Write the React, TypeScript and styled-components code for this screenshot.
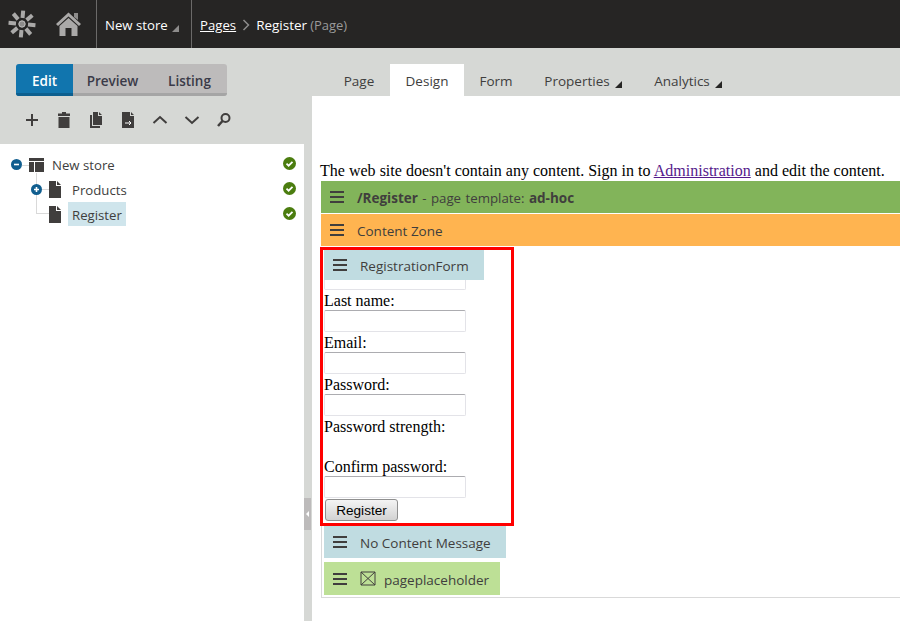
import React from 'react';
import styled, { createGlobalStyle } from 'styled-components';

const ui = '"Open Sans", "Noto Sans", sans-serif';

const GlobalStyle = createGlobalStyle`
  html, body {
    margin: 0;
    padding: 0;
    height: 621px;
    overflow: hidden;
    background: #d6d8d5;
  }
  * { box-sizing: border-box; }
`;

const Page = styled.div`
  width: 900px;
  height: 621px;
  display: flex;
  flex-direction: column;
  position: relative;
  overflow: hidden;
  font-family: ${ui};
  font-size: 13.5px;
  color: #403e3d;
`;

const Header = styled.header`
  height: 48px;
  background: #262524;
  display: flex;
  align-items: stretch;
  flex-shrink: 0;
`;

const Brand = styled.div`
  width: 97px;
  padding-left: 8px;
  display: flex;
  align-items: center;
  gap: 20px;
  border-right: 1px solid #6b6a69;
`;

const SiteSelect = styled.div`
  width: 95px;
  padding: 2px 0 0 8px;
  display: flex;
  align-items: center;
  gap: 4px;
  color: #fff;
  font-size: 13.2px;
  border-right: 1px solid #6b6a69;
`;

const Caret = styled.span<{ $color: string }>`
  width: 0;
  height: 0;
  margin-top: 7px;
  border-style: solid;
  border-width: 0 0 7px 7px;
  border-color: transparent transparent ${p => p.$color} transparent;
`;

const Crumbs = styled.nav`
  padding: 2px 0 0 8px;
  display: flex;
  align-items: center;
  gap: 6px;
  color: #fff;
`;

const CrumbLink = styled.a`
  color: #fff;
  font-size: 13.2px;
  text-decoration: underline;
`;

const CrumbType = styled.span`
  color: #9a9a9a;
  font-size: 13px;
  margin-left: -3px;
`;

const Body = styled.div`
  flex: 1;
  display: flex;
  min-height: 0;
`;

const Side = styled.aside`
  width: 304px;
  display: flex;
  flex-direction: column;
`;

const ModeBar = styled.div`
  margin: 16px 0 0 16px;
  width: 211px;
  height: 32px;
  display: flex;
  border-radius: 3px;
  overflow: hidden;
  background: #bdbbbb;
`;

const ModeButton = styled.div<{ $active?: boolean; $width: number }>`
  width: ${p => p.$width}px;
  height: 32px;
  display: flex;
  align-items: center;
  justify-content: center;
  font-weight: 600;
  padding-top: 4px;
  color: ${p => (p.$active ? '#fff' : '#3a3a48')};
  background: ${p => (p.$active ? '#1175ae' : 'transparent')};
  border-bottom: 3px solid ${p => (p.$active ? '#0d5f8f' : '#a5a5a5')};
  flex-shrink: 0;
`;

const Tools = styled.div`
  height: 48px;
  display: flex;
  align-items: center;
  padding-left: 24px;
  gap: 16px;
  svg { display: block; }
`;

const Tree = styled.div`
  flex: 1;
  background: #fff;
  padding-top: 8px;
  position: relative;
  font-size: 13.2px;
`;

const TreeRow = styled.div<{ $indent: number }>`
  height: 25px;
  display: flex;
  align-items: center;
  padding-left: ${p => p.$indent}px;
  position: relative;
`;

const TreeIcon = styled.span`
  width: 19px;
  display: flex;
  flex-shrink: 0;
`;

const Toggle = styled.span`
  width: 11px;
  height: 11px;
  border-radius: 50%;
  background: #105e8f;
  color: #fff;
  display: flex;
  align-items: center;
  justify-content: center;
  flex-shrink: 0;
  margin-right: 7px;
  position: relative;
  z-index: 1;
`;

const TreeLabel = styled.span<{ $selected?: boolean }>`
  padding: 0 4px;
  height: 24px;
  line-height: 26px;
  margin-bottom: 1px;
  background: ${p => (p.$selected ? '#cfe5ec' : 'transparent')};
`;

const StatusDot = styled.span`
  position: absolute;
  right: 8px;
  top: 5px;
  width: 13px;
  height: 13px;
  svg { display: block; }
`;

const Connector = styled.span<{ $left: number; $top: number; $w: number; $h: number }>`
  position: absolute;
  left: ${p => p.$left}px;
  top: ${p => p.$top}px;
  width: ${p => p.$w}px;
  height: ${p => p.$h}px;
  background: #d9d9d9;
`;

const Splitter = styled.div`
  width: 8px;
  position: relative;
`;

const SplitterHandle = styled.div`
  position: absolute;
  left: 0;
  top: 450px;
  width: 7px;
  height: 32px;
  background: #bdbbbb;
  display: flex;
  align-items: center;
  justify-content: center;
  &::after {
    content: '';
    border-style: solid;
    border-width: 3px 3px 3px 0;
    border-color: transparent #fff transparent transparent;
  }
`;

const Main = styled.main`
  flex: 1;
  display: flex;
  flex-direction: column;
  min-width: 0;
`;

const Tabs = styled.div`
  height: 48px;
  padding: 16px 0 0 16px;
  display: flex;
`;

const Tab = styled.div<{ $active?: boolean; $width: number }>`
  width: ${p => p.$width}px;
  height: 32px;
  display: flex;
  align-items: center;
  justify-content: center;
  gap: 5px;
  padding-top: 1px;
  background: ${p => (p.$active ? '#fff' : 'transparent')};
`;

const Canvas = styled.div`
  flex: 1;
  background: #fff;
  padding: 65px 0 0 8px;
  font-family: "Liberation Serif", serif;
  font-size: 16px;
  color: #000;
`;

const Intro = styled.div`
  height: 20px;
  line-height: 20px;
  white-space: nowrap;
  letter-spacing: 0.012px;
  a { color: #551a8b; text-decoration: underline; }
`;

const Zone = styled.div`
  margin-left: 1px;
  border-left: 1px solid #d9d9d9;
  border-bottom: 1px solid #d9d9d9;
  height: 351px;
`;

const Bar = styled.div<{ $bg: string; $tall?: number; $width?: number }>`
  height: ${p => p.$tall ?? 32}px;
  width: ${p => (p.$width ? `${p.$width}px` : 'auto')};
  background: ${p => p.$bg};
  display: flex;
  align-items: center;
  font-family: ${ui};
  font-size: 13.5px;
  color: #403e3d;
  white-space: nowrap;
  padding-left: 9px;
  margin-bottom: 1px;
  b { font-weight: 700; }
`;

const TopBar = styled(Bar)`
  margin-left: 1px;
`;

const BarText = styled.span`
  padding-top: 2px;
`;

const TemplateNote = styled.span`
  font-size: 13.3px;
  word-spacing: 0.9px;
`;

const BarIcon = styled.svg`
  width: 14px;
  height: 12px;
  margin-right: 13px;
  flex-shrink: 0;
`;

const PlaceholderIcon = styled.svg`
  width: 16px;
  height: 15px;
  margin-right: 8px;
  flex-shrink: 0;
`;

const RedBox = styled.div`
  width: 194px;
  height: 279px;
  margin-left: -2px;
  border: 3px solid #f00;
  position: relative;
  padding-left: 1px;
`;

const WebPartHeader = styled(Bar)`
  position: absolute;
  left: 1px;
  top: 0;
  z-index: 1;
`;

const Field = styled.div`
  height: 22px;
  width: 142px;
  background: #fff;
  border: 1px solid #e3e3e8;
  border-top-color: #acacb0;
  border-radius: 2px;
`;

const HiddenField = styled(Field)`
  margin-top: 18px;
`;

const Label = styled.div<{ $gap?: number }>`
  height: 20px;
  line-height: 21px;
  margin-bottom: ${p => p.$gap ?? 0}px;
  white-space: nowrap;
`;

const SubmitButton = styled.button`
  display: block;
  margin: 1px 0 0 1px;
  width: 73px;
  height: 22px;
  padding: 0;
  font-family: "Liberation Sans", sans-serif;
  font-size: 13.6px;
  color: #000;
  border: 1px solid #8f8f8f;
  border-radius: 3px;
  background: linear-gradient(#f4f4f4, #d2d2d2);
`;

const PlainBar = styled(Bar)`
  margin-left: 2px;
  margin-bottom: 4px;
`;

const Menu = () => (
  <BarIcon viewBox="0 0 14 12">
    <path d="M0 1h14M0 6h14M0 11h14" stroke="#403e3d" strokeWidth="2" />
  </BarIcon>
);

const DocIcon = () => (
  <svg width="12" height="17" viewBox="0 0 12 17">
    <path d="M0 0h7v5h5v12H0zM8 0l4 4H8z" fill="#403e3d" />
  </svg>
);

const Check = () => (
  <StatusDot>
    <svg width="13" height="13" viewBox="0 0 13 13">
      <circle cx="6.5" cy="6.5" r="6.5" fill="#4b7d0f" />
      <path d="M3.5 6.7l2.1 2 3.9-3.9" fill="none" stroke="#fff" strokeWidth="1.8" />
    </svg>
  </StatusDot>
);

const Logo = () => (
  <svg width="28" height="28" viewBox="0 0 28 28">
    <g stroke="#aaa9a8" strokeWidth="4">
      {[0, 45, 90, 135, 180, 225, 270, 315].map(a => (
        <line key={a} x1="14" y1="8" x2="14" y2="0.5" transform={`rotate(${a + 5} 14 14)`} />
      ))}
    </g>
    <circle cx="14" cy="14" r="5.5" fill="#262524" />
    <circle cx="14" cy="14" r="3.2" fill="#8d8c8b" stroke="#c4c3c2" />
  </svg>
);

const Home = () => (
  <svg width="25" height="24" viewBox="0 0 25 24">
    <path d="M18 1h4v7l-4-3z" fill="#8d8c8b" />
    <path d="M1 13L12.500 2.500 24 13" fill="none" stroke="#aaa9a8" strokeWidth="3" />
    <path d="M3.500 14l9-8 9 8v10h-6v-8h-6v8h-6z" fill="#aaa9a8" />
  </svg>
);

export default function App() {
  return (
    <Page>
      <GlobalStyle />
      <Header>
        <Brand>
          <Logo />
          <Home />
        </Brand>
        <SiteSelect>
          New store <Caret $color="#8d8c8b" />
        </SiteSelect>
        <Crumbs>
          <CrumbLink>Pages</CrumbLink>
          <svg width="8" height="12" viewBox="0 0 8 12">
            <path d="M1.5 1l5 5-5 5" fill="none" stroke="#8d8c8b" strokeWidth="1.5" />
          </svg>
          <span>Register</span>
          <CrumbType>(Page)</CrumbType>
        </Crumbs>
      </Header>
      <Body>
        <Side>
          <ModeBar>
            <ModeButton $active $width={57}>Edit</ModeButton>
            <ModeButton $width={79}>Preview</ModeButton>
            <ModeButton $width={75}>Listing</ModeButton>
          </ModeBar>
          <Tools>
            <svg width="16" height="16" viewBox="0 0 16 16">
              <path d="M8 2v12M2 8h12" stroke="#403e3d" strokeWidth="2" />
            </svg>
            <svg width="16" height="16" viewBox="0 0 16 16">
              <path d="M2 1.500h4V0h4v1.500h4V4H2zM2.500 5h11v11h-11z" fill="#403e3d" />
            </svg>
            <svg width="16" height="16" viewBox="0 0 16 16">
              <path d="M5 0h5v4h4v9H5zM11 0l3 3h-3zM2 3h2v11h8v2H2z" fill="#403e3d" />
            </svg>
            <svg width="16" height="16" viewBox="0 0 16 16">
              <path d="M2 0h8v4h4v12H2zM11 0l3 3h-3z" fill="#403e3d" />
              <path d="M5 11h6M9 9l2 2-2 2" stroke="#fff" fill="none" />
            </svg>
            <svg width="16" height="16" viewBox="0 0 16 16">
              <path d="M1.500 11l6.500-6 6.500 6" fill="none" stroke="#403e3d" strokeWidth="2" />
            </svg>
            <svg width="16" height="16" viewBox="0 0 16 16">
              <path d="M1.500 5l6.500 6 6.500-6" fill="none" stroke="#403e3d" strokeWidth="2" />
            </svg>
            <svg width="16" height="16" viewBox="0 0 16 16">
              <circle cx="9.500" cy="6" r="4" fill="none" stroke="#403e3d" strokeWidth="2" />
              <path d="M6.500 9l-4.500 5" stroke="#403e3d" strokeWidth="2.500" />
            </svg>
          </Tools>
          <Tree>
            <Connector $left={36} $top={29} $w={1} $h={41} />
            <Connector $left={36} $top={69} $w={14} $h={1} />
            <Connector $left={22} $top={21} $w={8} $h={1} />
            <Connector $left={42} $top={45} $w={8} $h={1} />
            <TreeRow $indent={11}>
              <Toggle>
                <svg width="7" height="7" viewBox="0 0 7 7"><path d="M1 3.500h5" stroke="#fff" strokeWidth="1.600" /></svg>
              </Toggle>
              <TreeIcon>
                <svg width="15" height="14" viewBox="0 0 15 14">
                  <path d="M0 0h15v3H0zM0 4h5v10H0zM6 4h9v10H6z" fill="#403e3d" />
                </svg>
              </TreeIcon>
              <TreeLabel>New store</TreeLabel>
              <Check />
            </TreeRow>
            <TreeRow $indent={31}>
              <Toggle>
                <svg width="7" height="7" viewBox="0 0 7 7"><path d="M1 3.500h5M3.500 1v5" stroke="#fff" strokeWidth="1.600" /></svg>
              </Toggle>
              <TreeIcon><DocIcon /></TreeIcon>
              <TreeLabel>Products</TreeLabel>
              <Check />
            </TreeRow>
            <TreeRow $indent={49}>
              <TreeIcon><DocIcon /></TreeIcon>
              <TreeLabel $selected>Register</TreeLabel>
              <Check />
            </TreeRow>
          </Tree>
        </Side>
        <Splitter>
          <SplitterHandle />
        </Splitter>
        <Main>
          <Tabs>
            <Tab $width={62}>Page</Tab>
            <Tab $active $width={74}>Design</Tab>
            <Tab $width={64}>Form</Tab>
            <Tab $width={110}>Properties <Caret $color="#262524" /></Tab>
            <Tab $width={100}>Analytics <Caret $color="#262524" /></Tab>
          </Tabs>
          <Canvas>
            <Intro>
              The web site doesn't contain any content. Sign in to <a>Administration</a> and edit the content.
            </Intro>
            <TopBar $bg="#82b45a">
              <Menu />
              <BarText>
                <b>/Register</b><TemplateNote> - page template: </TemplateNote><b>ad-hoc</b>
              </BarText>
            </TopBar>
            <TopBar $bg="#ffb450">
              <Menu />
              <BarText>Content Zone</BarText>
            </TopBar>
            <Zone>
              <RedBox>
                <WebPartHeader $bg="#c0dce1" $tall={30} $width={160}>
                  <Menu />
                  <BarText>RegistrationForm</BarText>
                </WebPartHeader>
                <HiddenField />
                <Label>Last name:</Label>
                <Field />
                <Label>Email:</Label>
                <Field />
                <Label>Password:</Label>
                <Field />
                <Label $gap={20}>Password strength:</Label>
                <Label>Confirm password:</Label>
                <Field />
                <SubmitButton>Register</SubmitButton>
              </RedBox>
              <PlainBar $bg="#c0dce1" $width={182}>
                <Menu />
                <BarText>No Content Message</BarText>
              </PlainBar>
              <PlainBar $bg="#bde096" $tall={33} $width={176}>
                <Menu />
                <PlaceholderIcon viewBox="0 0 16 15">
                  <path d="M1 1h14v13H1zM1 1l14 13M15 1L1 14" fill="none" stroke="#403e3d" />
                </PlaceholderIcon>
                <BarText>pageplaceholder</BarText>
              </PlainBar>
            </Zone>
          </Canvas>
        </Main>
      </Body>
    </Page>
  );
}
